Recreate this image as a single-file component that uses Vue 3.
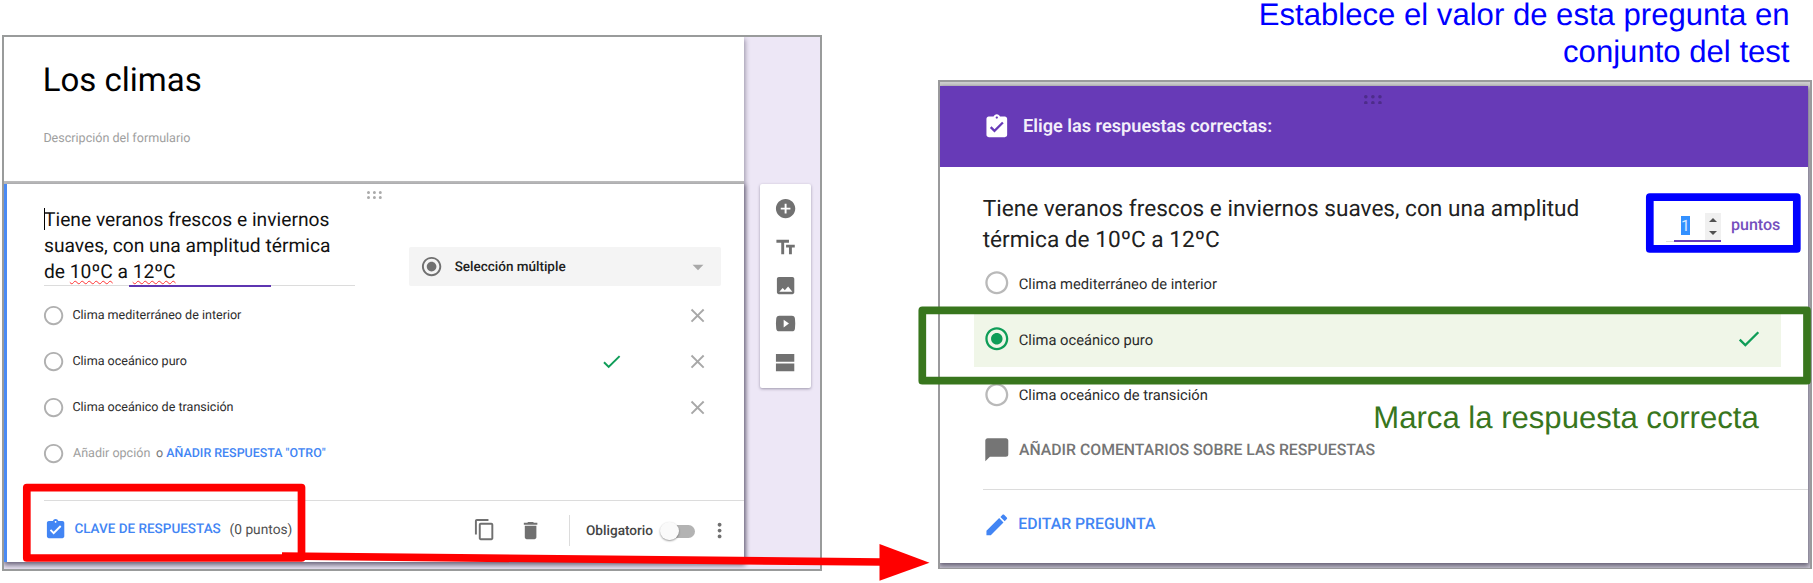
<script setup>
import { h } from 'vue'

const paths = {
  clipboard: 'M19 3h-4.18C14.4 1.84 13.3 1 12 1c-1.3 0-2.4.84-2.82 2H5c-1.1 0-2 .9-2 2v14c0 1.1.9 2 2 2h14c1.1 0 2-.9 2-2V5c0-1.1-.9-2-2-2zm-7 0c.55 0 1 .45 1 1s-.45 1-1 1-1-.45-1-1 .45-1 1-1zm-2 14l-4-4 1.41-1.41L10 14.17l6.59-6.59L18 9l-8 8z',
  add: 'M12 2C6.48 2 2 6.48 2 12s4.48 10 10 10 10-4.48 10-10S17.52 2 12 2zm5 11h-4v4h-2v-4H7v-2h4V7h2v4h4v2z',
  title: 'M2.5 4v3h5v12h3V7h5V4h-13zm19 5h-9v3h3v7h3v-7h3V9z',
  image: 'M21 19V5c0-1.1-.9-2-2-2H5c-1.1 0-2 .9-2 2v14c0 1.1.9 2 2 2h14c1.1 0 2-.9 2-2zM9 14.5l2.200 2.200L14.600 13l4.400 5.500H5.500z',
  video: 'M5.5 4h13c2 0 3 1 3.2 3 .4 3.300.4 6.700 0 10-.2 2-1.200 3-3.200 3h-13c-2 0-3-1-3.200-3-.4-3.300-.4-6.700 0-10C2.500 5 3.500 4 5.500 4zM10 8v8l5.500-4z',
  section: 'M2 3h19v8H2zM2 13h19v8H2z',
  copy: 'M16 1H4c-1.1 0-2 .9-2 2v14h2V3h12V1zm3 4H8c-1.1 0-2 .9-2 2v14c0 1.1.9 2 2 2h11c1.1 0 2-.9 2-2V7c0-1.1-.9-2-2-2zm0 16H8V7h11v14z',
  trash: 'M6 19c0 1.1.9 2 2 2h8c1.1 0 2-.9 2-2V7H6v12zM19 4h-3.5l-1-1h-5l-1 1H5v2h14V4z',
  comment: 'M20 2H4c-1.1 0-2 .9-2 2v18l4-4h14c1.1 0 2-.9 2-2V4c0-1.1-.9-2-2-2z',
  edit: 'M3 17.25V21h3.75L17.81 9.94l-3.75-3.75L3 17.25zM20.71 7.04c.39-.39.39-1.02 0-1.41l-2.34-2.34c-.39-.39-1.02-.39-1.41 0l-1.83 1.83 3.75 3.75 1.83-1.83z',
  check: 'M9 16.17L4.83 12l-1.42 1.41L9 19 21 7l-1.41-1.41z',
  close: 'M19 6.41L17.59 5 12 10.59 6.41 5 5 6.41 10.59 12 5 17.59 6.41 19 12 13.41 17.59 19 19 17.59 13.41 12z',
  more: 'M12 8c1.1 0 2-.9 2-2s-.9-2-2-2-2 .9-2 2 .9 2 2 2zm0 2c-1.1 0-2 .9-2 2s.9 2 2 2 2-.9 2-2-.9-2-2-2zm0 6c-1.1 0-2 .9-2 2s.9 2 2 2 2-.9 2-2-.9-2-2-2z',
  down: 'M7 10l5 5 5-5z',
  radio: 'M12 2C6.48 2 2 6.48 2 12s4.48 10 10 10 10-4.48 10-10S17.52 2 12 2zm0 18c-4.42 0-8-3.58-8-8s3.58-8 8-8 8 3.58 8 8-3.58 8-8 8z',
  radioOn: 'M12 7c-2.76 0-5 2.24-5 5s2.24 5 5 5 5-2.24 5-5-2.24-5-5-5zm0-5C6.48 2 2 6.48 2 12s4.48 10 10 10 10-4.48 10-10S17.52 2 12 2zm0 18c-4.42 0-8-3.58-8-8s3.58-8 8-8 8 3.58 8 8-3.58 8-8 8z',
  grip: 'M0 1.500a1.500 1.500 0 1 0 3 0a1.500 1.500 0 1 0-3 0zM5.900 1.500a1.500 1.500 0 1 0 3 0a1.500 1.500 0 1 0-3 0zM11.800 1.500a1.500 1.500 0 1 0 3 0a1.500 1.500 0 1 0-3 0zM0 6.500a1.500 1.500 0 1 0 3 0a1.500 1.500 0 1 0-3 0zM5.900 6.500a1.500 1.500 0 1 0 3 0a1.500 1.500 0 1 0-3 0zM11.800 6.500a1.500 1.500 0 1 0 3 0a1.500 1.500 0 1 0-3 0z'
}

const Icon = (props) =>
  h('svg', { viewBox: props.name === 'grip' ? '0 0 15 8' : '0 0 24 24', fill: 'currentColor' }, [
    h('path', { d: paths[props.name], 'fill-rule': 'evenodd' })
  ])
Icon.props = ['name']

const options = [
  { text: 'Clima mediterráneo de interior', correct: false },
  { text: 'Clima oceánico puro', correct: true },
  { text: 'Clima oceánico de transición', correct: false }
]
const tools = ['add', 'title', 'image', 'video', 'section']
</script>

<template>
  <div class="slide">
    <section class="editor">
      <div class="form">
        <header class="form-head">
          <h1>Los climas</h1>
          <p>Descripción del formulario</p>
        </header>
        <div class="card">
          <Icon name="grip" class="grip" />
          <div class="question-row">
            <div class="question">
              <i class="caret"></i>
              Tiene veranos frescos e inviernos<br />suaves, con una amplitud térmica<br />de
              <span class="typo">10ºC</span> a <span class="typo">12ºC</span>
              <i class="focus-line"></i>
            </div>
            <div class="select">
              <Icon name="radioOn" class="ic" />
              <span>Selección múltiple</span>
              <Icon name="down" class="arrow" />
            </div>
          </div>
          <div class="options">
            <div v-for="o in options" :key="o.text" class="option">
              <Icon name="radio" class="ic ring" />
              <span class="label">{{ o.text }}</span>
              <Icon v-if="o.correct" name="check" class="ic tick" />
              <Icon name="close" class="ic close" />
            </div>
            <div class="option">
              <Icon name="radio" class="ic ring" />
              <span class="add-option">Añadir opción</span>
              <span class="or">o</span>
              <span class="other">AÑADIR RESPUESTA "OTRO"</span>
            </div>
          </div>
          <footer class="card-foot">
            <div class="key">
              <Icon name="clipboard" class="ic" />
              <b>CLAVE DE RESPUESTAS</b>
              <span>(0 puntos)</span>
            </div>
            <div class="actions">
              <Icon name="copy" class="ic copy" />
              <Icon name="trash" class="ic" />
              <i class="divider"></i>
              <span class="required">Obligatorio</span>
              <i class="toggle"></i>
              <Icon name="more" class="ic more" />
            </div>
          </footer>
        </div>
      </div>
      <aside class="side">
        <div class="toolbar">
          <Icon v-for="t in tools" :key="t" :name="t" class="ic" />
        </div>
      </aside>
    </section>

    <section class="answers">
      <div class="sheet">
        <header class="sheet-head">
          <Icon name="grip" class="grip" />
          <Icon name="clipboard" class="big" />
          <h2>Elige las respuestas correctas:</h2>
        </header>
        <div class="prompt">
          <p>Tiene veranos frescos e inviernos suaves, con una amplitud<br />térmica de 10ºC a 12ºC</p>
          <div class="points">
            <div class="number">
              <span class="value">1</span>
              <span class="spinner"><i class="up"></i><i class="dn"></i></span>
            </div>
            <span class="unit">puntos</span>
          </div>
        </div>
        <div v-for="o in options" :key="o.text" class="answer" :class="{ correct: o.correct }">
          <Icon :name="o.correct ? 'radioOn' : 'radio'" class="big" />
          <span>{{ o.text }}</span>
          <Icon v-if="o.correct" name="check" class="big tick" />
        </div>
        <div class="feedback">
          <Icon name="comment" class="big" />
          <span>AÑADIR COMENTARIOS SOBRE LAS RESPUESTAS</span>
        </div>
        <div class="edit">
          <Icon name="edit" class="big" />
          <span>EDITAR PREGUNTA</span>
        </div>
      </div>
    </section>

    <!-- Callouts drawn over both panels -->
    <svg class="marks" viewBox="0 0 1813 583">
      <rect x="26.8" y="487.6" width="274.700" height="70.400" stroke="#f00" />
      <path d="M282 556L882 562" stroke="#f00" />
      <path d="M879.500 544L929.500 562.700L879.500 580.700z" class="head" />
      <rect x="1649.800" y="197.200" width="147" height="51.700" stroke="#00f" />
      <rect x="922.300" y="310.400" width="884.700" height="70.300" stroke="#38761d" />
    </svg>
    <p class="note note-value">Establece el valor de esta pregunta en<br />conjunto del test</p>
    <p class="note note-correct">Marca la respuesta correcta</p>
  </div>
</template>

<style>
body { margin: 0; background: #fff; }
</style>

<style scoped>
* { box-sizing: border-box; }
h1, h2, p { margin: 0; font-weight: 400; }
svg { display: block; flex: none; }
.slide {
  position: relative;
  width: 1813px;
  height: 583px;
  overflow: hidden;
  display: flex;
  align-items: flex-start;
  padding-left: 2px;
  font-family: Roboto, sans-serif;
  color: #212121;
  text-rendering: geometricPrecision;
  white-space: nowrap;
}
.ic { width: 23.2px; height: 23.2px; }
.big { width: 27.6px; height: 27.6px; }

/* Form editor */
.editor {
  width: 820px;
  height: 536px;
  margin-top: 35px;
  border: 2px solid #999b9b;
  background: #ede7f6;
  display: flex;
  overflow: hidden;
}
.form { width: 740px; height: 525px; background: #fff; box-shadow: 0 3px 5px 1px rgba(40, 32, 60, .45); }
.form-head { height: 147px; padding: 23.500px 0 0 38.700px; border-style: solid; border-width: 0 0 3px; border-image: linear-gradient(#e6e6e6, #bdbdbd) 1; }
.form-head h1 { font-size: 33px; line-height: 40px; }
.form-head p { font-size: 12.560px; line-height: 20px; margin: 28.800px 0 0 .7px; color: #9e9e9e; }
.card { position: relative; height: 378px; border-left: 3px solid #4a8af4; padding: 22.400px 0 0 37px; box-shadow: 2px 1px 4px rgba(40, 32, 60, .4); }
.form-head h1 { color: #000; }
.card > .grip { position: absolute; left: 360px; top: 7px; width: 15px; height: 8px; color: #ababab; }
.question-row { display: flex; height: 79.600px; }
.question { position: relative; width: 311px; height: 79.600px; padding-top: .7px; border-bottom: 1px solid #dcdcdc; font-size: 19.230px; line-height: 26px; color: #111; }
.typo { text-decoration: underline wavy #f33 1px; text-underline-offset: 2px; text-decoration-skip-ink: none; }
.caret { position: absolute; left: 0; top: 2px; width: 1px; height: 22px; background: #000; }
.focus-line { position: absolute; left: 85px; bottom: -2px; width: 142px; height: 2px; background: #5e35b1; }
.select { margin: 40.600px 0 0 54px; width: 312px; height: 39.500px; padding: 0 10px 0 11px; border-radius: 2px; background: #f4f4f4; display: flex; align-items: center; font-size: 13.490px; font-weight: 500; color: #212121; }
.select .ic { color: #707070; }
.select span { margin-left: 11.500px; flex: 1; }
.select .arrow { width: 26px; height: 26px; color: #a8a8a8; }
.options { margin: 6.300px 0 0 -1.800px; width: 667.200px; }
.option { height: 46.050px; display: flex; align-items: center; font-size: 12.550px; color: #2b2b2b; }
.option span { margin-left: 7px; padding-top: 1px; }
.option .ring { color: #b0b0b0; }
.option .label { flex: 1; }
.tick { color: #0f9d58; }
.option .close { color: #a8a8a8; margin-left: 63.300px; }
.option .add-option { color: #9e9e9e; margin-left: 7.600px; }
.option .or { color: #757575; margin-left: 5.700px; }
.option .other { color: #4285f4; font-size: 12.430px; font-weight: 500; margin-left: 3.200px; }
.card-foot { margin-top: 23.300px; height: 61px; border-top: 1px solid #dcdcdc; display: flex; justify-content: space-between; padding-right: 13.200px; }
.key { display: flex; align-items: center; height: 57px; color: #4285f4; }
.key b { font-size: 13.510px; font-weight: 500; margin-left: 7.200px; }
.key span { font-size: 13.740px; margin: 2px 0 0 8.800px; color: #505050; }
.actions { display: flex; align-items: center; height: 60px; color: #707070; }
.actions .copy { margin-right: 22.900px; margin-top: -2px; }
.divider { width: 1px; height: 31px; background: #dcdcdc; margin: 0 16px 0 26.800px; }
.required { font-size: 13.600px; font-weight: 500; color: #444; margin-top: 1px; }
.toggle { position: relative; width: 26px; height: 13.500px; margin: 1px 0 0 16px; border-radius: 7px; background: #b3b3b3; }
.toggle::before { content: ""; position: absolute; left: -9px; top: -2.700px; width: 18.500px; height: 18.500px; border-radius: 50%; background: #fafafa; box-shadow: 0 1px 2px rgba(0, 0, 0, .4); }
.more { margin-left: 12.600px; }
.side { flex: 1; padding: 147px 0 0 16px; }
.toolbar { width: 50.500px; height: 204px; background: #fff; border-radius: 2px; box-shadow: 0 1px 3px rgba(40, 32, 60, .4); display: flex; flex-direction: column; align-items: center; gap: 15.200px; padding-top: 13.200px; color: #717171; }

/* Answer key */
.answers { width: 874px; height: 489px; margin: 80px 0 0 116px; padding-top: 3.500px; border: 2px solid #9a9a9c; border-bottom-width: 1px; background: linear-gradient(#d2d2d2 0 5px, #cdcad6 5px); overflow: hidden; }
.sheet { width: 868px; height: 477px; background: #fff; box-shadow: 0 2px 5px 1px rgba(30, 24, 50, .6); }
.sheet-head { position: relative; height: 81.500px; display: flex; align-items: center; padding: 1px 0 0 42.900px; background: #673ab7; color: #fff; }
.sheet-head .grip { position: absolute; left: 423.500px; top: 9px; width: 18px; height: 9.600px; color: #4d2c8a; }
.sheet-head h2 { font-size: 18.150px; font-weight: 600; margin-left: 12.600px; color: #f3effa; }
.prompt { display: flex; justify-content: space-between; height: 88.400px; padding: 27.200px 27.600px 0 42.700px; }
.prompt p { font-size: 22.640px; line-height: 30.600px; color: #212121; }
.points { display: flex; align-items: center; height: 60px; margin-top: -.5px; }
.number { position: relative; display: flex; justify-content: space-between; align-items: center; width: 47px; height: 29px; margin-top: 8px; border-bottom: 2px solid #673ab7; padding-left: 7px; }
.number::before { content: ""; position: absolute; left: -8px; bottom: -2px; width: 8px; height: 1px; background: #ddd; }
.value { width: 9px; height: 19px; margin-top: -2px; background: #3390ff; color: #d5e9ff; font-size: 15.700px; line-height: 19px; text-align: center; }
.spinner { width: 16px; height: 27px; background: #f0f0f0; display: flex; flex-direction: column; align-items: center; justify-content: center; gap: 8.500px; }
.spinner i { border: 4px solid transparent; }
.spinner .up { border-top: 0; border-bottom-color: #505050; }
.spinner .dn { border-bottom: 0; border-top-color: #505050; }
.unit { font-size: 16.090px; font-weight: 500; color: #7550bd; margin: 2px 0 0 10px; }
.answer { height: 55.600px; display: flex; align-items: center; padding: 0 0 0 42.900px; font-size: 14.730px; color: #2b2b2b; }
.answer > .big { color: #b9b9b9; }
.answer span { margin: 1.500px 0 0 8.300px; flex: 1; }
.answer.correct { margin: 0 27px 0 34px; padding: 0 18px 0 8.900px; background: #f0f6e8; }
.answer.correct .big { color: #0f9d58; }
.feedback, .edit { display: flex; align-items: center; margin-left: 42.900px; font-size: 15.800px; font-weight: 500; }
.feedback { height: 67px; padding-bottom: 12px; color: #757575; }
.feedback span { margin-left: 8.500px; }
.edit { height: 70px; border-top: 1px solid #dcdcdc; color: #4285f4; }
.edit span { margin: 0 0 2px 7.800px; }

/* Callouts */
.marks { position: absolute; left: 0; top: 0; width: 1813px; height: 583px; fill: none; stroke-width: 7.700; stroke-linejoin: round; }
.marks .head { fill: #f00; stroke: none; }
.note { position: absolute; font-family: "Liberation Sans", Arial, sans-serif; font-size: 31.100px; line-height: 37px; }
.note-value { right: 23.500px; top: -4px; color: #00f; text-align: right; }
.note-correct { left: 1373.300px; top: 399px; color: #38761d; }
</style>
